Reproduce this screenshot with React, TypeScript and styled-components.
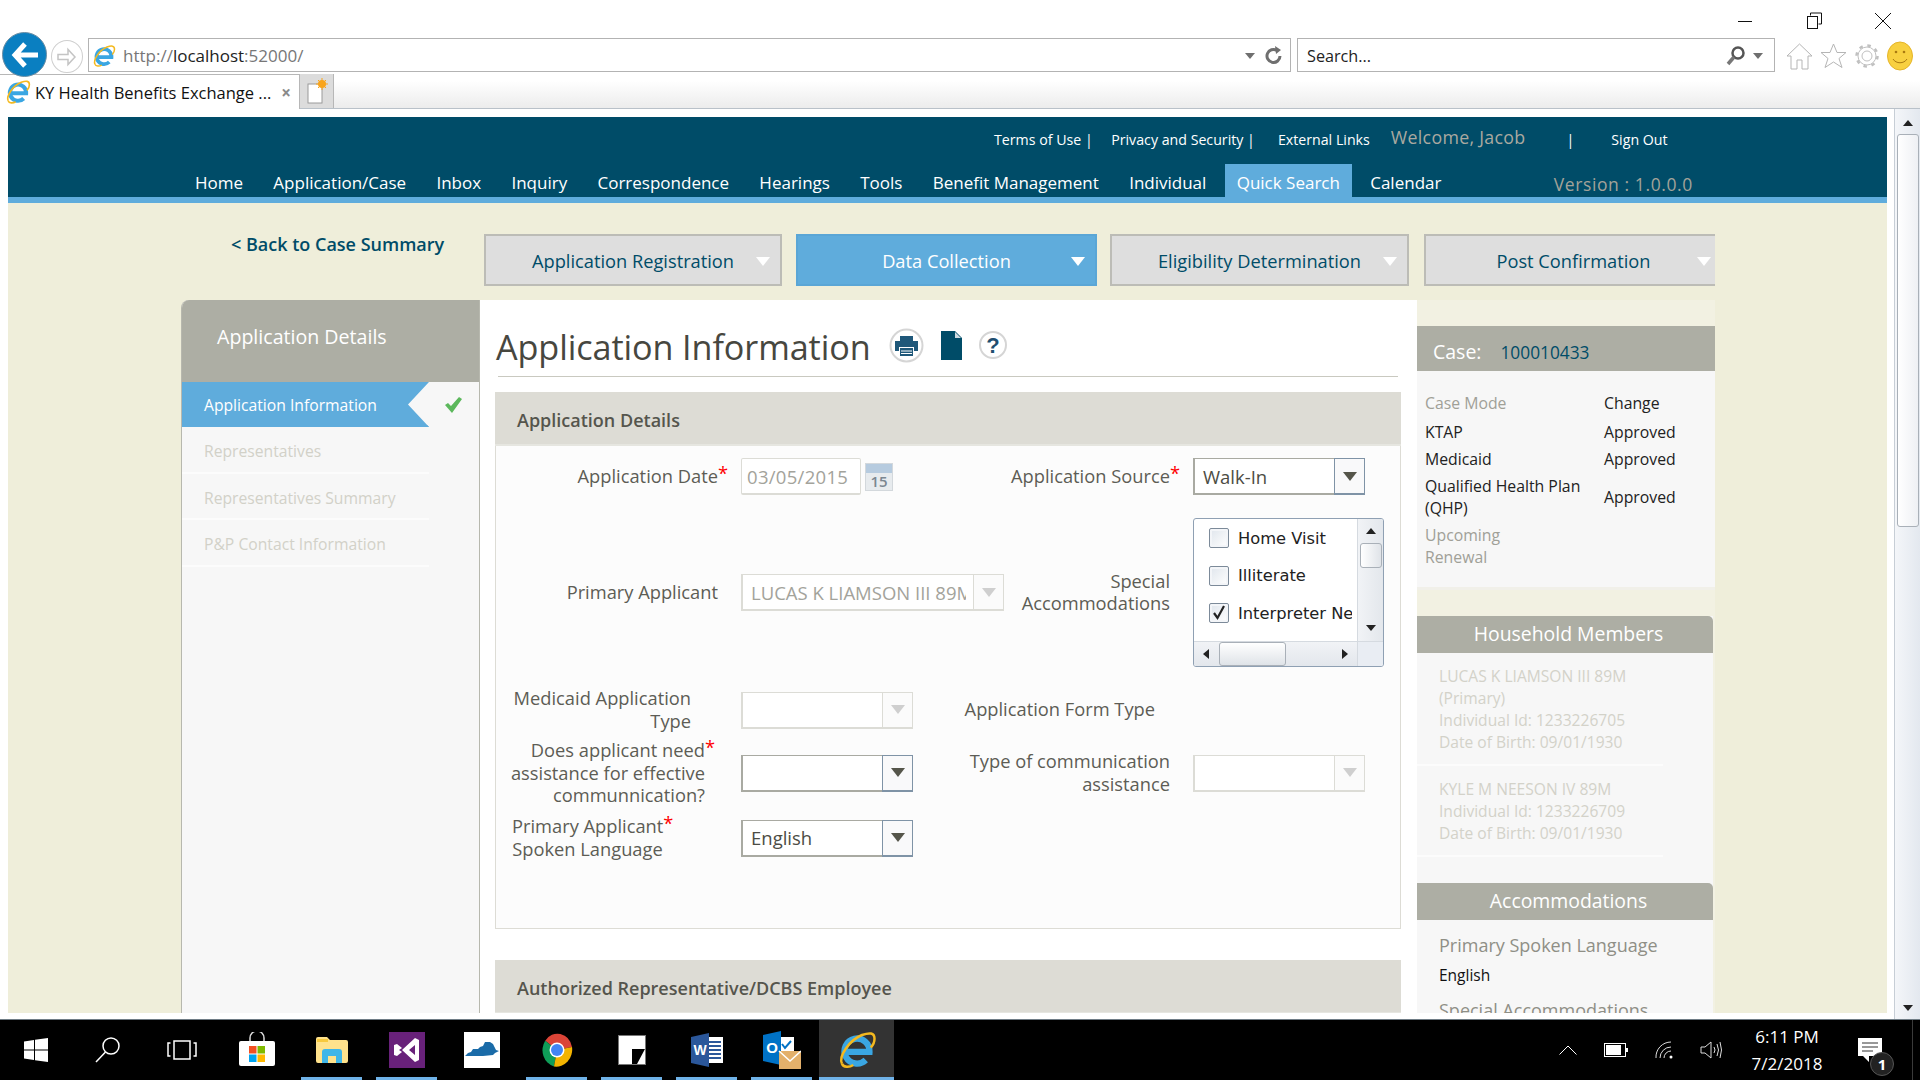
import React from "react";
import styled, { createGlobalStyle } from "styled-components";

const sans = `"Open Sans", "Noto Sans", sans-serif`;

const GlobalStyle = createGlobalStyle`
  html, body {
    margin: 0;
    padding: 0;
    background: #fff;
    overflow: hidden;
  }
  * {
    box-sizing: border-box;
  }
`;

const Screen = styled.div`
  width: 1920px;
  height: 1080px;
  display: flex;
  flex-direction: column;
  overflow: hidden;
  font-family: ${sans};
  background: #fff;
`;

/* browser chrome */
const WindowBar = styled.div`
  height: 38px;
  flex: none;
  display: flex;
  justify-content: flex-end;
  align-items: center;
  padding: 4px 24px 0 0;
  gap: 43px;
`;
const WinBtn = styled.div`
  width: 26px;
  height: 24px;
  display: flex;
  align-items: center;
  justify-content: center;
`;
const AddressRow = styled.div`
  height: 36px;
  flex: none;
  display: flex;
  align-items: flex-start;
  position: relative;
  z-index: 2;
`;
const BackBtn = styled.div`
  width: 45px;
  height: 45px;
  flex: none;
  margin: -6px 0 0 2px;
  border-radius: 50%;
  background: #0a7fc1;
  border: 1px solid #6b8ea5;
  display: flex;
  align-items: center;
  justify-content: center;
`;
const ForwardBtn = styled.div`
  width: 32px;
  height: 33px;
  flex: none;
  margin: 2px 5px 0 4px;
  border-radius: 50%;
  border: 1px solid #cfcfcf;
  display: flex;
  align-items: center;
  justify-content: center;
`;
const Field = styled.div<{ $width: number; $pad: number; $left?: number }>`
  width: ${(p) => p.$width}px;
  height: 34px;
  flex: none;
  margin-left: ${(p) => p.$left ?? 0}px;
  padding-left: ${(p) => p.$pad}px;
  padding-top: 1px;
  border: 1px solid #b3b3b3;
  display: flex;
  align-items: center;
  font-size: 16.2px;
  color: #222;
`;
const Url = styled.span`
  margin-left: 7px;
  font-size: 17px;
`;
const UrlPart = styled.span<{ $dark?: boolean }>`
  color: ${(p) => (p.$dark ? "#222" : "#777")};
`;
const Grow = styled.span`
  flex: 1;
`;
const SmallCaret = styled.span<{ $right?: number }>`
  width: 0;
  height: 0;
  margin-right: ${(p) => p.$right ?? 0}px;
  border-left: 5px solid transparent;
  border-right: 5px solid transparent;
  border-top: 6px solid #6f6f6f;
`;
const FieldIcon = styled.span<{ $left: number; $right: number }>`
  display: flex;
  margin: 0 ${(p) => p.$right}px 0 ${(p) => p.$left}px;
`;
const ToolIcons = styled.div`
  display: flex;
  align-items: center;
  gap: 7px;
  margin-left: 11px;
  height: 34px;
  padding-top: 2px;
`;
const TabStrip = styled.div`
  height: 35px;
  flex: none;
  display: flex;
  background: linear-gradient(#fff 20%, #ececec);
  border-bottom: 1px solid #b9c1c9;
`;
const Tab = styled.div`
  width: 300px;
  height: 35px;
  flex: none;
  display: flex;
  align-items: center;
  padding: 0 7px 0 5px;
  gap: 4px;
  background: #fff;
  border: 1px solid #b7b7b7;
  border-bottom: none;
  border-left: none;
  font-size: 16.5px;
  color: #111;
  white-space: nowrap;
`;
const TabClose = styled.span`
  color: #8a8a8a;
  font-size: 17px;
  font-weight: 700;
  margin-left: 6px;
`;
const NewTab = styled.div`
  width: 34px;
  height: 34px;
  flex: none;
  background: #dcdcdc;
  border-right: 1px solid #b7b7b7;
  display: flex;
  align-items: center;
  justify-content: center;
`;

/* page frame */
const Frame = styled.div`
  flex: 1;
  min-height: 0;
  display: flex;
  padding: 8px 0 6px 8px;
  background: #fff;
  border-bottom: 1px solid #6f7c85;
`;
const Page = styled.div`
  width: 1879px;
  flex: none;
  overflow: hidden;
  background: #efeeda;
  display: flex;
  flex-direction: column;
`;
const PageScroll = styled.div`
  width: 26px;
  flex: none;
  margin: -8px 0 -6px 7px;
  background: linear-gradient(90deg, #f4f6f9, #e3e8ef);
  border-left: 1px solid #c7ced6;
  display: flex;
  flex-direction: column;
  align-items: center;
  padding: 11px 0 8px;
`;
const Arrow = styled.span<{ $dir: "up" | "down" | "left" | "right"; $size?: number }>`
  width: 0;
  height: 0;
  flex: none;
  ${({ $dir, $size = 5 }) =>
    $dir === "up"
      ? `border-left:${$size}px solid transparent;border-right:${$size}px solid transparent;border-bottom:${$size + 1}px solid #222;`
      : $dir === "down"
        ? `border-left:${$size}px solid transparent;border-right:${$size}px solid transparent;border-top:${$size + 1}px solid #222;`
        : $dir === "left"
          ? `border-top:${$size}px solid transparent;border-bottom:${$size}px solid transparent;border-right:${$size + 1}px solid #222;`
          : `border-top:${$size}px solid transparent;border-bottom:${$size}px solid transparent;border-left:${$size + 1}px solid #222;`}
`;
const PageThumb = styled.div`
  width: 22px;
  height: 393px;
  flex: none;
  margin-top: 8px;
  border: 1px solid #a9b0b8;
  border-radius: 3px;
  background: linear-gradient(90deg, #fff, #eef0f4);
`;

/* site header */
const SiteHeader = styled.header`
  flex: none;
  height: 86px;
  background: #004c68;
  border-bottom: 6px solid #5facdc;
`;
const TopLinks = styled.div`
  height: 44px;
  display: flex;
  align-items: center;
  padding-left: 986px;
  font-size: 14.2px;
  color: #fff;
  white-space: nowrap;
`;
const TopLink = styled.span<{ $left: number }>`
  margin-left: ${(p) => p.$left}px;
`;
const Welcome = styled.span`
  margin-left: 21px;
  margin-top: -5px;
  font-size: 17.8px;
  letter-spacing: 0.3px;
  color: #aaa9a0;
`;
const NavRow = styled.nav`
  height: 36px;
  display: flex;
  align-items: flex-end;
  padding-left: 175px;
  gap: 6.3px;
`;
const NavItem = styled.span<{ $active?: boolean }>`
  height: 33px;
  display: flex;
  align-items: center;
  padding: 3px 12px 0;
  font-size: 17px;
  color: #fff;
  background: ${(p) => (p.$active ? "#5facdc" : "transparent")};
  white-space: nowrap;
`;
const Version = styled.span`
  margin: 0 0 1px 94px;
  font-size: 17.5px;
  letter-spacing: 0.6px;
  color: #a3a39a;
  white-space: nowrap;
`;

/* page body */
const Content = styled.div`
  flex: 1;
  min-height: 0;
  padding: 31px 0 0 173px;
  display: flex;
  flex-direction: column;
`;
const StepRow = styled.div`
  width: 1534px;
  display: flex;
  align-items: flex-start;
  flex: none;
  height: 66px;
  overflow: hidden;
`;
const BackLink = styled.a`
  width: 303px;
  flex: none;
  padding: 0 0 0 50px;
  font-size: 18px;
  line-height: 20px;
  font-weight: 600;
  color: #004c68;
  white-space: nowrap;
`;
const StepTab = styled.div<{ $width: number; $gap: number; $active?: boolean }>`
  width: ${(p) => p.$width}px;
  margin-right: ${(p) => p.$gap}px;
  height: 52px;
  flex: none;
  position: relative;
  display: flex;
  align-items: center;
  justify-content: center;
  font-size: 18.25px;
  color: ${(p) => (p.$active ? "#fff" : "#004c68")};
  background: ${(p) => (p.$active ? "#5facdc" : "#dedede")};
  border: 2px solid ${(p) => (p.$active ? "#5aa6d6" : "#bcbcb6")};
  &::after {
    content: "";
    position: absolute;
    right: 10px;
    top: 21px;
    border-left: 7px solid transparent;
    border-right: 7px solid transparent;
    border-top: 9px solid #fff;
  }
`;
const Columns = styled.div`
  display: flex;
  align-items: stretch;
  flex: 1;
`;

/* left menu */
const Sidebar = styled.aside`
  width: 299px;
  flex: none;
  min-height: 760px;
  background: #f7f7f7;
  border: 1px solid #b7b8ae;
  border-top: none;
  border-radius: 8px 0 0 0;
  overflow: hidden;
`;
const SideHead = styled.div`
  height: 82px;
  padding: 23px 0 0 36px;
  margin: 0 -1px;
  background: #adaea4;
  color: #fff;
  font-size: 19.6px;
  line-height: 28px;
`;
const SideRow = styled.div`
  display: flex;
  align-items: center;
`;
const SideItem = styled.div<{ $active?: boolean }>`
  width: 247px;
  height: ${(p) => (p.$active ? 45 : 46.5)}px;
  flex: none;
  display: flex;
  align-items: center;
  padding: ${(p) => (p.$active ? 2 : 4)}px 0 0 22px;
  font-size: 15.7px;
  white-space: nowrap;
  color: ${(p) => (p.$active ? "#fff" : "#d2d1c8")};
  background: ${(p) => (p.$active ? "#5facdc" : "transparent")};
  border-bottom: 2px solid ${(p) => (p.$active ? "#5facdc" : "#fcfcfc")};
  clip-path: ${(p) => (p.$active ? "polygon(0 0, 100% 0, 91.5% 50%, 100% 100%, 0 100%)" : "none")};
`;
const CheckMark = styled.span`
  margin-left: 15px;
  display: flex;
`;

/* main form */
const Main = styled.main`
  width: 937px;
  flex: none;
  background: #fff;
  padding: 0 16px 0 15px;
`;
const TitleRow = styled.div`
  height: 77px;
  margin-left: 3px;
  margin-right: 3px;
  display: flex;
  align-items: center;
  border-bottom: 1px solid #c9c9c0;
`;
const Title = styled.h1`
  margin: 17px 0 0 -2px;
  font-size: 34.2px;
  line-height: 42px;
  font-weight: 400;
  letter-spacing: -0.1px;
  color: #47473f;
  white-space: nowrap;
`;
const TitleIcons = styled.div`
  display: flex;
  align-items: center;
  margin: 14px 0 0 18px;
  gap: 17px;
`;
const SectionHead = styled.div<{ $top: number }>`
  height: 54px;
  margin-top: ${(p) => p.$top}px;
  padding: 3px 0 0 22px;
  display: flex;
  align-items: center;
  background: #dddcd5;
  border-bottom: 2px solid #e6e6e0;
  font-size: 18px;
  font-weight: 600;
  color: #55554d;
`;
const SectionBody = styled.div`
  height: 483px;
  padding-top: 12px;
  background: #fcfcfc;
  border: 1px solid #dddcd5;
  border-top: none;
`;
const FormRow = styled.div<{ $height: number; $gap?: number }>`
  height: ${(p) => p.$height}px;
  margin-bottom: ${(p) => p.$gap ?? 0}px;
  display: grid;
  grid-template-columns: 245px 216px 236px 1fr;
  align-items: center;
`;
const Label = styled.label<{ $pad?: number; $center?: boolean }>`
  display: block;
  padding: 0 ${(p) => p.$pad ?? 23}px 1px 0;
  text-align: ${(p) => (p.$center ? "center" : "right")};
  font-size: 18.3px;
  line-height: 22.5px;
  color: #5d5d55;
  white-space: nowrap;
`;
const CenterLabel = styled(Label)`
  padding-left: 16px;
`;
const Req = styled.span`
  color: #f00;
  margin-right: -10px;
  vertical-align: 3px;
  line-height: 0;
`;
const DateCell = styled.div`
  display: flex;
  align-items: center;
  gap: 4px;
`;
const TextBox = styled.div`
  width: 120px;
  height: 37px;
  display: flex;
  align-items: center;
  padding-left: 5px;
  background: #fff;
  border: 1px solid #dcdcd6;
  border-bottom-width: 2px;
  border-radius: 2px;
  font-size: 18.5px;
  letter-spacing: 0.3px;
  color: #a3a39b;
`;
const CalendarIcon = styled.div`
  width: 28px;
  height: 28px;
  display: flex;
  flex-direction: column;
  background: #e7ebee;
  border: 1px solid #d3d8dc;
  color: #7b8791;
  font-size: 15px;
  font-weight: 600;
  line-height: 17px;
  text-align: center;
  &::before {
    content: "";
    height: 9px;
    background: #b6cbdf;
    flex: none;
  }
`;
const Select = styled.div<{ $width: number; $disabled?: boolean }>`
  width: ${(p) => p.$width}px;
  height: 37px;
  display: flex;
  align-items: stretch;
  background: #fff;
  border: 1px solid ${(p) => (p.$disabled ? "#dcdcd6" : "#a9aaa2")};
  border-width: 1px 1px 2px 2px;
  font-size: 18.5px;
  color: ${(p) => (p.$disabled ? "#a3a39b" : "#4c4c44")};
`;
const SelectValue = styled.div`
  flex: 1;
  min-width: 0;
  margin-right: 7px;
  overflow: hidden;
  white-space: nowrap;
  display: flex;
  align-items: center;
  padding-left: 8px;
`;
const SelectBtn = styled.div<{ $disabled?: boolean }>`
  width: 31px;
  flex: none;
  margin: -1px -1px -2px 0;
  display: flex;
  align-items: center;
  justify-content: center;
  background: ${(p) => (p.$disabled ? "#fbfbfb" : "#f9f9fa")};
  border: 1px solid ${(p) => (p.$disabled ? "#dcdcd6" : "#7f93a6")};
  border-bottom-width: 2px;
  &::after {
    content: "";
    border-left: 7px solid transparent;
    border-right: 7px solid transparent;
    border-top: 9px solid ${(p) => (p.$disabled ? "#cfcfcf" : "#55554a")};
  }
`;

/* check list */
const ListBox = styled.div`
  width: 191px;
  height: 149px;
  display: grid;
  grid-template-columns: 1fr 26px;
  grid-template-rows: 1fr 25px;
  background: #fff;
  border: 1px solid #8fa0b3;
  border-radius: 3px;
  overflow: hidden;
`;
const ListItems = styled.div`
  padding: 9px 0 0 15px;
  margin-right: 5px;
  overflow: hidden;
  display: flex;
  flex-direction: column;
  gap: 17.5px;
`;
const ListItem = styled.div`
  height: 20px;
  display: flex;
  align-items: center;
  gap: 9px;
  white-space: nowrap;
  font-family: "DejaVu Sans", sans-serif;
  font-size: 16.3px;
  color: #222;
`;
const CheckBox = styled.span`
  width: 20px;
  height: 20px;
  flex: none;
  display: flex;
  align-items: center;
  justify-content: center;
  border: 1px solid #7c8a99;
  border-radius: 2px;
  background: linear-gradient(135deg, #dfe5ec, #fff);
  box-shadow: inset 0 0 0 2px #f3f5f8;
`;
const ListVScroll = styled.div`
  display: flex;
  flex-direction: column;
  align-items: center;
  padding-top: 9px;
  background: linear-gradient(90deg, #f1f3f6, #e3e7ec);
  border-left: 1px solid #d5dae0;
`;
const ListVThumb = styled.div`
  width: 22px;
  height: 25px;
  margin-top: 9px;
  flex: none;
  border: 1px solid #a9b0b8;
  border-radius: 3px;
  background: linear-gradient(90deg, #fff, #dfe3e8);
`;
const ListDown = styled.div`
  margin-top: 57px;
  display: flex;
`;
const ListHScroll = styled.div`
  display: flex;
  align-items: center;
  padding: 0 9px;
  background: linear-gradient(#f1f3f6, #e3e7ec);
  border-top: 1px solid #d5dae0;
`;
const ListHThumb = styled.div`
  width: 67px;
  height: 24px;
  margin-left: 10px;
  flex: none;
  border: 1px solid #a9b0b8;
  border-radius: 3px;
  background: linear-gradient(#fff, #dfe3e8);
`;
const ListRight = styled.div`
  margin-left: auto;
  display: flex;
`;
const ListCorner = styled.div`
  background: #e9edf3;
  border-left: 1px solid #d5dae0;
  border-top: 1px solid #d5dae0;
`;

/* right side panels */
const Side = styled.aside`
  width: 298px;
  flex: none;
  padding-top: 26px;
  background: #f2f1e2;
`;
const CaseHead = styled.div`
  height: 45px;
  display: flex;
  align-items: center;
  gap: 19px;
  padding: 6px 0 0 16px;
  background: #adaea4;
`;
const CaseLabel = styled.span`
  font-size: 19.5px;
  color: #fff;
`;
const CaseNumber = styled.span`
  font-size: 17.3px;
  color: #004c68;
  margin-top: 2px;
`;
const CaseBody = styled.div`
  height: 219px;
  padding: 21px 8px 0;
  background: #f7f7f7;
  border-bottom: 3px solid #f1f0e9;
  display: grid;
  grid-template-columns: 179px 1fr;
  grid-auto-rows: min-content;
  align-items: center;
  font-size: 15.8px;
  line-height: 22px;
  color: #222;
`;
const CaseCell = styled.div<{ $muted?: boolean; $pb?: number }>`
  color: ${(p) => (p.$muted ? "#a0a097" : "#222")};
  padding-bottom: ${(p) => p.$pb ?? 5}px;
`;
const SidePanel = styled.div`
  width: 296px;
  background: #f7f7f7;
`;
const PanelHead = styled.div<{ $top: number }>`
  height: 37px;
  margin-top: ${(p) => p.$top}px;
  padding: 0 0 2px 7px;
  display: flex;
  align-items: center;
  justify-content: center;
  background: #adaea4;
  border-radius: 0 5px 0 0;
  color: #fff;
  font-size: 19.4px;
`;
const Member = styled.div`
  margin-top: 12px;
  padding: 0 0 11px 22px;
  font-size: 15.6px;
  line-height: 22px;
  color: #d3d2c9;
  border-bottom: 2px solid #fcfcfc;
  width: 246px;
  white-space: nowrap;
`;
const AccomTitle = styled.div<{ $top?: number }>`
  padding: ${(p) => p.$top ?? 0}px 0 0 22px;
  font-size: 18px;
  line-height: 24px;
  color: #8f8f86;
  white-space: nowrap;
`;
const AccomValue = styled.div`
  padding: 7px 0 12px 22px;
  font-size: 15.5px;
  line-height: 22px;
  color: #111;
`;

/* taskbar */
const Taskbar = styled.footer`
  height: 60px;
  flex: none;
  background: #000;
  display: flex;
`;
const TaskSlot = styled.div<{ $width?: number; $open?: boolean; $current?: boolean }>`
  width: ${(p) => p.$width ?? 75}px;
  flex: none;
  display: flex;
  align-items: center;
  justify-content: center;
  position: relative;
  background: ${(p) => (p.$current ? "#333" : "transparent")};
  &::after {
    content: "";
    display: ${(p) => (p.$open || p.$current ? "block" : "none")};
    position: absolute;
    bottom: 0;
    left: ${(p) => (p.$current ? 0 : 7)}px;
    right: ${(p) => (p.$current ? 0 : 7)}px;
    height: 3px;
    background: #6fb2e8;
  }
`;
const Tray = styled.div`
  margin-left: auto;
  display: flex;
  align-items: center;
`;
const Clock = styled.div`
  width: 90px;
  margin: 0 26px 0 20px;
  text-align: center;
  color: #fff;
  font-size: 17px;
  line-height: 27px;
`;
const NotifyWrap = styled.div`
  width: 38px;
  margin-right: 16px;
  position: relative;
  display: flex;
`;
const NotifyBadge = styled.span`
  position: absolute;
  left: 12px;
  top: 14px;
  width: 24px;
  height: 24px;
  border-radius: 50%;
  background: #222;
  border: 1px solid #555;
  color: #fff;
  font-size: 15px;
  font-weight: 700;
  line-height: 22px;
  text-align: center;
`;
const ShowDesktop = styled.div`
  width: 8px;
  align-self: stretch;
  border-left: 1px solid #3a3a3a;
`;
const TrayIcon = styled.div<{ $mr: number }>`
  margin-right: ${(p) => p.$mr}px;
  display: flex;
`;

const IeLogo: React.FC<{ size: number }> = ({ size }) => (
  <svg width={size} height={size} viewBox="0 0 32 32" fill="none">
    <path d="M8 17.5h18a10 10 0 1 0-3 6.5" stroke="#3aa6e2" strokeWidth="5" />
    <path d="M4 27C1 21 10 8 20 4c6-2 10-2 10 3 0 2-1 5-3 7" stroke="#f4b91f" strokeWidth="2" />
    <path d="M4 27c1 3 6 3 9 1" stroke="#f4b91f" strokeWidth="2" />
  </svg>
);

const App: React.FC = () => {
  const nav = ["Home", "Application/Case", "Inbox", "Inquiry", "Correspondence", "Hearings", "Tools", "Benefit Management", "Individual"];
  return (
    <Screen>
      <GlobalStyle />
      <WindowBar>
        <WinBtn>
          <svg width="16" height="16"><path d="M1 8.5h14" stroke="#111" strokeWidth="1" /></svg>
        </WinBtn>
        <WinBtn>
          <svg width="16" height="18" fill="none" stroke="#111">
            <path d="M4.5 3.5v-2.500h11v11h-3" />
            <rect x="1.500" y="4.500" width="10" height="12" />
          </svg>
        </WinBtn>
        <WinBtn>
          <svg width="18" height="18"><path d="M1 1l16 16M17 1L1 17" stroke="#111" strokeWidth="1" /></svg>
        </WinBtn>
      </WindowBar>
      <AddressRow>
        <BackBtn>
          <svg width="28" height="26" fill="none" stroke="#fff" strokeWidth="5">
            <path d="M27 13H4M14 2L4 13l10 11" />
          </svg>
        </BackBtn>
        <ForwardBtn>
          <svg width="20" height="20" fill="none" stroke="#c4c4c4" strokeWidth="1.500">
            <path d="M1 7.500h10v-5l7 7.500-7 7.500v-5H1z" />
          </svg>
        </ForwardBtn>
        <Field $width={1203} $pad={3}>
          <IeLogo size={24} />
          <Url>
            <UrlPart>http://</UrlPart>
            <UrlPart $dark>localhost</UrlPart>
            <UrlPart>:52000/</UrlPart>
          </Url>
          <Grow />
          <SmallCaret />
          <FieldIcon $left={8} $right={5}>
            <svg width="22" height="22" viewBox="0 0 22 22" fill="none">
              <path d="M17 11a6.500 6.500 0 1 1-3-5.500" stroke="#6f6f6f" strokeWidth="3" />
              <path d="M12 1l6 4-5 4z" fill="#6f6f6f" />
            </svg>
          </FieldIcon>
        </Field>
        <Field $width={478} $pad={9} $left={6}>
          Search...
          <Grow />
          <FieldIcon $left={0} $right={6}>
            <svg width="22" height="22" viewBox="0 0 22 22" fill="none">
              <circle cx="13" cy="8" r="5.500" stroke="#555" strokeWidth="2.500" />
              <path d="M9 12l-6 7" stroke="#777" strokeWidth="3.500" />
            </svg>
          </FieldIcon>
          <SmallCaret $right={11} />
        </Field>
        <ToolIcons>
          <svg width="27" height="30" viewBox="0 0 27 30" fill="#fff" stroke="#b5b5b5">
            <path d="M13.500 3L26 15h-4v13h-6v-9h-5v9H5V15H1z" />
          </svg>
          <svg width="27" height="28" viewBox="0 0 27 28" fill="#fff" stroke="#b5b5b5">
            <path d="M13.500 2l3.500 8.500h9l-7 6 3 9-8.500-5.500L5 25.500l3-9-7-6h9z" />
          </svg>
          <svg width="26" height="26" viewBox="0 0 26 26" fill="none" stroke="#c0c0c0">
            <circle cx="13" cy="13" r="5" />
            <circle cx="13" cy="13" r="10.500" strokeWidth="2.500" strokeDasharray="3.500 4.750" />
            <circle cx="13" cy="13" r="9" />
          </svg>
          <svg width="26" height="30" viewBox="0 0 26 30">
            <ellipse cx="13" cy="15" rx="12.500" ry="14" fill="#f8d040" stroke="#e5b52a" />
            <circle cx="9" cy="11" r="1.300" fill="#a97a10" />
            <circle cx="17" cy="11" r="1.300" fill="#a97a10" />
            <path d="M6 18c3 5 11 5 14 0" fill="none" stroke="#a97a10" />
          </svg>
        </ToolIcons>
      </AddressRow>
      <TabStrip>
        <Tab>
          <IeLogo size={26} />
          KY Health Benefits Exchange ...
          <TabClose>×</TabClose>
        </Tab>
        <NewTab>
          <svg width="22" height="26" viewBox="0 0 22 26">
            <rect x="2" y="6" width="14" height="19" fill="#fff" stroke="#9a9a9a" />
            <circle cx="16" cy="6" r="4" fill="#f9a41a" />
            <path d="M16 0v12M10 6h12M12 2l8 8M20 2l-8 8" stroke="#f9a41a" strokeWidth="1" />
          </svg>
        </NewTab>
      </TabStrip>
      <Frame>
        <Page>
          <SiteHeader>
            <TopLinks>
              <TopLink $left={0}>Terms of Use |</TopLink>
              <TopLink $left={18.5}>Privacy and Security |</TopLink>
              <TopLink $left={23}>External Links</TopLink>
              <Welcome>Welcome, Jacob</Welcome>
              <TopLink $left={41}>|</TopLink>
              <TopLink $left={37}>Sign Out</TopLink>
            </TopLinks>
            <NavRow>
              {nav.map((item) => (
                <NavItem key={item}>{item}</NavItem>
              ))}
              <NavItem $active>Quick Search</NavItem>
              <NavItem>Calendar</NavItem>
              <Version>Version : 1.0.0.0</Version>
            </NavRow>
          </SiteHeader>
          <Content>
            <StepRow>
              <BackLink>&lt; Back to Case Summary</BackLink>
              <StepTab $width={298} $gap={14}>Application Registration</StepTab>
              <StepTab $width={301} $gap={13} $active>Data Collection</StepTab>
              <StepTab $width={299} $gap={15}>Eligibility Determination</StepTab>
              <StepTab $width={299} $gap={0}>Post Confirmation</StepTab>
            </StepRow>
            <Columns>
              <Sidebar>
                <SideHead>Application Details</SideHead>
                <SideRow>
                  <SideItem $active>Application Information</SideItem>
                  <CheckMark>
                    <svg width="18" height="16" viewBox="0 0 18 16">
                      <path d="M1 8l3-2 3 3 8-9 3 2-10 14z" fill="#5cb85c" />
                    </svg>
                  </CheckMark>
                </SideRow>
                <SideItem>Representatives</SideItem>
                <SideItem>Representatives Summary</SideItem>
                <SideItem>P&amp;P Contact Information</SideItem>
              </Sidebar>
              <Main>
                <TitleRow>
                  <Title>Application Information</Title>
                  <TitleIcons>
                    <svg width="35" height="35" viewBox="0 0 35 35">
                      <circle cx="17.500" cy="17.500" r="16" fill="#fff" stroke="#d5d5d5" strokeWidth="2" />
                      <path d="M11 13V8h13v5z" fill="#1f587a" />
                      <path d="M6 13h23v10h-4v-4H10v4H6z" fill="#1f587a" />
                      <path d="M11 20h13v8H11z" fill="#1f587a" />
                      <path d="M12 23h11M12 25.500h11" stroke="#fff" strokeWidth="1" />
                    </svg>
                    <svg width="21" height="29" viewBox="0 0 21 29">
                      <path d="M0 0h14l7 7v22H0z" fill="#004c68" />
                      <path d="M14 1v6h6z" fill="#cfdbe2" />
                    </svg>
                    <svg width="28" height="28" viewBox="0 0 28 28">
                      <circle cx="14" cy="14" r="13" fill="#fff" stroke="#d5d5d5" strokeWidth="2" />
                      <text x="14" y="22" textAnchor="middle" fontFamily="Liberation Sans, sans-serif" fontWeight="700" fontSize="22" fill="#1f4f70">?</text>
                    </svg>
                  </TitleIcons>
                </TitleRow>
                <SectionHead $top={15}>Application Details</SectionHead>
                <SectionBody>
                  <FormRow $height={37} $gap={23}>
                    <Label>Application Date<Req>*</Req></Label>
                    <DateCell>
                      <TextBox>03/05/2015</TextBox>
                      <CalendarIcon>15</CalendarIcon>
                    </DateCell>
                    <Label>Application Source<Req>*</Req></Label>
                    <Select $width={172}>
                      <SelectValue>Walk-In</SelectValue>
                      <SelectBtn />
                    </Select>
                  </FormRow>
                  <FormRow $height={149} $gap={20}>
                    <Label>Primary Applicant</Label>
                    <Select $width={263} $disabled>
                      <SelectValue>LUCAS K LIAMSON III 89M</SelectValue>
                      <SelectBtn $disabled />
                    </Select>
                    <Label>Special<br />Accommodations</Label>
                    <ListBox>
                      <ListItems>
                        <ListItem><CheckBox />Home Visit</ListItem>
                        <ListItem><CheckBox />Illiterate</ListItem>
                        <ListItem>
                          <CheckBox>
                            <svg width="16" height="16" viewBox="0 0 16 16" fill="none" stroke="#222" strokeWidth="2.200">
                              <path d="M3 8l3.500 5L13 1" />
                            </svg>
                          </CheckBox>
                          Interpreter Needed
                        </ListItem>
                      </ListItems>
                      <ListVScroll>
                        <Arrow $dir="up" />
                        <ListVThumb />
                        <ListDown><Arrow $dir="down" /></ListDown>
                      </ListVScroll>
                      <ListHScroll>
                        <Arrow $dir="left" />
                        <ListHThumb />
                        <ListRight><Arrow $dir="right" /></ListRight>
                      </ListHScroll>
                      <ListCorner />
                    </ListBox>
                  </FormRow>
                  <FormRow $height={45} $gap={7}>
                    <Label $pad={50}>Medicaid Application<br />Type</Label>
                    <Select $width={172} $disabled>
                      <SelectValue />
                      <SelectBtn $disabled />
                    </Select>
                    <Label $pad={38}>Application Form Type</Label>
                  </FormRow>
                  <FormRow $height={68} $gap={8}>
                    <Label $pad={36}>Does applicant need<Req>*</Req><br />assistance for effective<br />communnication?</Label>
                    <Select $width={172}>
                      <SelectValue />
                      <SelectBtn />
                    </Select>
                    <Label>Type of communication<br />assistance</Label>
                    <Select $width={172} $disabled>
                      <SelectValue />
                      <SelectBtn $disabled />
                    </Select>
                  </FormRow>
                  <FormRow $height={45}>
                    <CenterLabel $pad={78} $center>Primary Applicant<Req>*</Req><br />Spoken Language</CenterLabel>
                    <Select $width={172}>
                      <SelectValue>English</SelectValue>
                      <SelectBtn />
                    </Select>
                  </FormRow>
                </SectionBody>
                <SectionHead $top={31}>Authorized Representative/DCBS Employee</SectionHead>
              </Main>
              <Side>
                <CaseHead>
                  <CaseLabel>Case:</CaseLabel>
                  <CaseNumber>100010433</CaseNumber>
                </CaseHead>
                <CaseBody>
                  <CaseCell $muted $pb={7}>Case Mode</CaseCell>
                  <CaseCell $pb={7}>Change</CaseCell>
                  <CaseCell>KTAP</CaseCell>
                  <CaseCell>Approved</CaseCell>
                  <CaseCell>Medicaid</CaseCell>
                  <CaseCell>Approved</CaseCell>
                  <CaseCell>Qualified Health Plan (QHP)</CaseCell>
                  <CaseCell>Approved</CaseCell>
                  <CaseCell $muted $pb={0}>Upcoming<br />Renewal</CaseCell>
                </CaseBody>
                <SidePanel>
                  <PanelHead $top={26}>Household Members</PanelHead>
                  <Member>LUCAS K LIAMSON III 89M<br />(Primary)<br />Individual Id: 1233226705<br />Date of Birth: 09/01/1930</Member>
                  <Member>KYLE M NEESON IV 89M<br />Individual Id: 1233226709<br />Date of Birth: 09/01/1930</Member>
                  <PanelHead $top={26}>Accommodations</PanelHead>
                  <AccomTitle $top={13}>Primary Spoken Language</AccomTitle>
                  <AccomValue>English</AccomValue>
                  <AccomTitle>Special Accommodations</AccomTitle>
                </SidePanel>
              </Side>
            </Columns>
          </Content>
        </Page>
        <PageScroll>
          <Arrow $dir="up" />
          <PageThumb />
          <Grow />
          <Arrow $dir="down" />
        </PageScroll>
      </Frame>
      <Taskbar>
        <TaskSlot $width={72}>
          <svg width="24" height="24" viewBox="0 0 24 24" fill="#fff">
            <path d="M0 3.500l10-1.500v9.500H0zM11 1.800L24 0v11.500H11zM0 12.500h10V22L0 20.500zM11 12.500h13V24l-13-1.800z" />
          </svg>
        </TaskSlot>
        <TaskSlot $width={72}>
          <svg width="26" height="26" viewBox="0 0 26 26" fill="none" stroke="#fff" strokeWidth="1.500">
            <circle cx="16" cy="9" r="8" />
            <path d="M10.500 15L1 25" />
          </svg>
        </TaskSlot>
        <TaskSlot>
          <svg width="30" height="20" viewBox="0 0 30 20" fill="none" stroke="#fff" strokeWidth="1.500">
            <rect x="7" y="1" width="16" height="18" />
            <path d="M3.500 3H1v13h2.500M26.500 3H29v13h-2.500" />
          </svg>
        </TaskSlot>
        <TaskSlot>
          <svg width="36" height="36" viewBox="0 0 36 36">
            <path d="M11 10V6a7 7 0 0 1 14 0v4" fill="none" stroke="#ddd" strokeWidth="1.500" />
            <rect x="0" y="9" width="36" height="25" rx="2" fill="#fff" />
            <rect x="10" y="14" width="7.500" height="7.500" fill="#f25022" />
            <rect x="18.500" y="14" width="7.500" height="7.500" fill="#7fba00" />
            <rect x="10" y="22.500" width="7.500" height="7.500" fill="#00a4ef" />
            <rect x="18.500" y="22.500" width="7.500" height="7.500" fill="#ffb900" />
          </svg>
        </TaskSlot>
        <TaskSlot $open>
          <svg width="32" height="28" viewBox="0 0 32 28">
            <path d="M0 3q0-2 2-2h9l3 3h16q2 0 2 2v19q0 2-2 2H2q-2 0-2-2z" fill="#ffe28c" />
            <path d="M1 3h11v3H1z" fill="#f7c93e" />
            <path d="M6 27V16q0-3 3-3h14q3 0 3 3v11h-6v-7h-8v7z" fill="#3fb6e8" />
          </svg>
        </TaskSlot>
        <TaskSlot $open>
          <svg width="36" height="36" viewBox="0 0 36 36">
            <rect width="36" height="36" fill="#68217a" />
            <path d="M26 6L13 18l13 12 4-2V8zM26 13v10l-6-5zM5 13l3-1 5 4-3 2 3 2-5 4-3-1z" fill="#fff" fillRule="evenodd" />
          </svg>
        </TaskSlot>
        <TaskSlot>
          <svg width="36" height="36" viewBox="0 0 36 36">
            <rect width="36" height="36" fill="#fff" />
            <path d="M1 24l3-3 3-1 2-3h5l2-2 3-1 2-4h5l3 2 3 6 3 1-4 2-2 2-10 1z" fill="#1a6ba8" />
          </svg>
        </TaskSlot>
        <TaskSlot $open>
          <svg width="34" height="34" viewBox="0 0 34 34">
            <path d="M17 17L5.200 7.700A15 17 0 0 1 32 14z" fill="#db4437" />
            <path d="M17 17L5.200 7.700A16 17 0 0 0 14 33.500z" fill="#0f9d58" />
            <path d="M17 17L32 14A16 17 0 0 1 14 33.500z" fill="#f4b400" />
            <circle cx="17" cy="17" r="7.500" fill="#fff" />
            <circle cx="17" cy="17" r="6" fill="#4285f4" />
          </svg>
        </TaskSlot>
        <TaskSlot $open>
          <svg width="28" height="30" viewBox="0 0 28 30">
            <rect x="0.500" y="0.500" width="27" height="29" fill="#fff" stroke="#777" />
            <path d="M27 16v13H17z" fill="#fff" />
            <path d="M14 14h13l-8 15h-5z" fill="#000" />
          </svg>
        </TaskSlot>
        <TaskSlot $open>
          <svg width="32" height="34" viewBox="0 0 32 34">
            <rect x="14" y="4" width="18" height="26" fill="#fff" />
            <path d="M17 9h13M17 13h13M17 17h13M17 21h13M17 25h13" stroke="#2b579a" strokeWidth="2" />
            <path d="M0 4l18-4v34L0 30z" fill="#2b579a" />
            <text x="9" y="22" textAnchor="middle" fontFamily="Liberation Sans, sans-serif" fontWeight="700" fontSize="14" fill="#fff">W</text>
          </svg>
        </TaskSlot>
        <TaskSlot $open>
          <svg width="38" height="38" viewBox="0 0 38 38">
            <rect x="14" y="6" width="17" height="20" fill="#fff" />
            <path d="M19 13l3 4 6-7" fill="none" stroke="#0072c6" strokeWidth="2" />
            <path d="M0 4l18-4v34L0 30z" fill="#0072c6" />
            <text x="9" y="22" textAnchor="middle" fontFamily="Liberation Sans, sans-serif" fontWeight="700" fontSize="15" fill="#fff">O</text>
            <rect x="16" y="20" width="22" height="18" fill="#e3b06b" />
            <path d="M16 20l11 10 11-10" fill="none" stroke="#fff" strokeWidth="1.500" />
          </svg>
        </TaskSlot>
        <TaskSlot $current>
          <IeLogo size={40} />
        </TaskSlot>
        <Tray>
          <TrayIcon $mr={27}>
            <svg width="18" height="10" fill="none" stroke="#fff"><path d="M0.500 9.500L9 1l8.500 8.500" /></svg>
          </TrayIcon>
          <TrayIcon $mr={27}>
            <svg width="24" height="14" fill="none" stroke="#fff">
              <rect x="0.500" y="0.500" width="21" height="13" />
              <rect x="2" y="2" width="15" height="10" fill="#fff" stroke="none" />
              <rect x="22" y="5" width="2" height="4" fill="#fff" stroke="none" />
            </svg>
          </TrayIcon>
          <TrayIcon $mr={25}>
            <svg width="20" height="18" fill="none" stroke="#ddd">
              <path d="M1 17A15 15 0 0 1 16 1M5 17A11 11 0 0 1 16 6M9 17a7 7 0 0 1 7-7" />
              <circle cx="16" cy="16" r="1.500" fill="#fff" stroke="none" />
            </svg>
          </TrayIcon>
          <TrayIcon $mr={0}>
            <svg width="22" height="20" fill="none" stroke="#ddd">
              <path d="M1 7h4l6-5v16l-6-5H1zM14 7q2 3 0 6M17 4q3 6 0 12M20 2q3 8 0 16" />
            </svg>
          </TrayIcon>
          <Clock>6:11 PM<br />7/2/2018</Clock>
          <NotifyWrap>
            <svg width="24" height="24" viewBox="0 0 24 24">
              <path d="M0 0h24v18H11v6l-6-6H0z" fill="#fff" />
              <path d="M4 5h16M4 9h16M4 13h11" stroke="#333" strokeWidth="1" />
            </svg>
            <NotifyBadge>1</NotifyBadge>
          </NotifyWrap>
          <ShowDesktop />
        </Tray>
      </Taskbar>
    </Screen>
  );
};

export default App;
